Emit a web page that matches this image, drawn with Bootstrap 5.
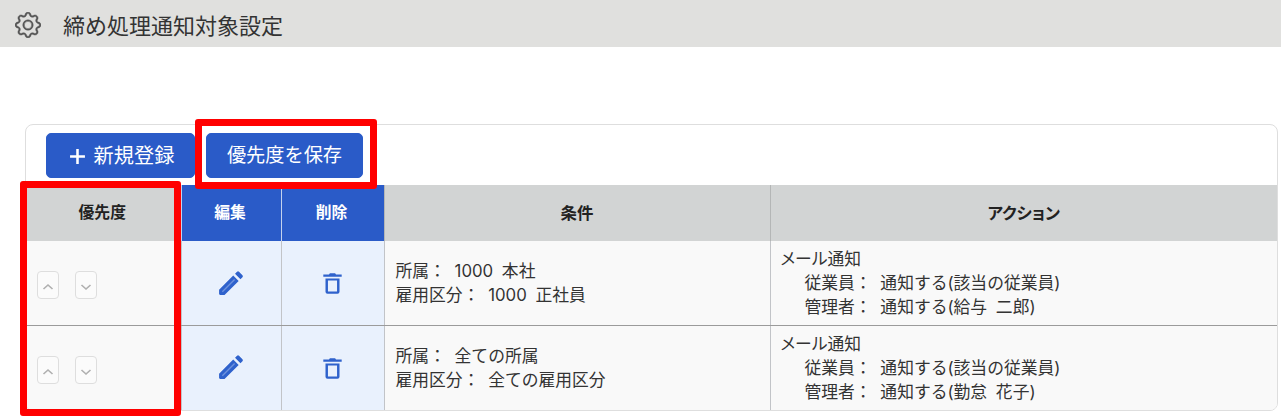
<!DOCTYPE html>
<html lang="ja">
<head>
<meta charset="utf-8">
<title>締め処理通知対象設定</title>
<link rel="stylesheet" href="https://cdn.jsdelivr.net/npm/bootstrap@5.3.0/dist/css/bootstrap.min.css">
<style>
html,body{height:100%;overflow:hidden}
body{font-family:Inter,"Noto Sans CJK JP",sans-serif;font-size:16.8px;color:#333;background:#fff;position:relative}
.page-head{height:47px;background:#e0e0de;padding-left:15px;gap:22px}
.page-head svg{width:26px;height:26px;fill:#555;stroke:#555;stroke-width:.25;position:relative;top:1px}
.page-head h1{font-size:22px;font-weight:400;margin:0;color:#333;line-height:1;position:relative;top:2px}
.panel{margin:77px 3px 0 25px;height:287px;border:1px solid #dedede;border-radius:8px;overflow:hidden}
.tools{height:60px;padding:8px 0 0 20px;gap:11px}
.act-btn{background:#2a5bc8;border-color:#2a5bc8;color:#fff;font-size:19.2px;line-height:1;height:45px;padding:1px 0 0;border-radius:5px;display:flex;align-items:center;justify-content:center}
.act-btn:hover{background:#2a5bc8;border-color:#2a5bc8;color:#fff}
.act-plus{width:149px;gap:8px;font-size:20.2px;padding-left:2px}
.act-plus svg{width:17px;height:17px;fill:#fff}
.act-save{width:157px}
.grid-tbl{table-layout:fixed;width:100%;margin:0;border-collapse:collapse;font-size:16.8px;line-height:24px}
.c1{width:155px}.c2{width:100px}.c3{width:103px}.c4{width:386px}
.grid-tbl th{height:56px;background:#d2d4d4;color:#222;font-weight:700;text-align:center;vertical-align:middle;padding:0;border:0;font-size:15.8px;border-left:1px solid #b4b6b6}
.grid-tbl th:first-child{border-left:0;padding-right:2px}
.grid-tbl th.blue{background:#2a5bc8;color:#fff;border-left-color:#c4d2ee;padding-right:2px}
.grid-tbl th.wide{font-size:16.4px}
.grid-tbl td{height:84.5px;background:#f9f9f9;color:#333;padding:0 10px 0 11px;vertical-align:middle;border:0;border-left:1px solid #c2c4c8;border-bottom:1px solid #9b9b9b;word-spacing:4px}
.grid-tbl td:first-child{border-left:0}
.grid-tbl td:last-child{padding-left:10px}
.grid-tbl td.pale{background:#e9f1fd;padding:0;text-align:center}
.grid-tbl td.prio{padding:0 0 0 11px}
.indent{padding-left:24px}
.kana{font-feature-settings:"palt"}
.mv{width:22px;height:28px;padding:0;background:#fbfbfb;border:1px solid #dedede;border-radius:4px;display:flex;align-items:center;justify-content:center}
.mv svg{width:12px;height:12px;fill:none;stroke:#b0b0b0;stroke-width:1.6;position:relative;top:2px}
.mv-row{gap:16px;position:relative;top:2px}
.ico-pen{width:29px;height:29px;fill:#2f62cc;position:relative;left:-1px}
.ico-pen line{stroke:#6f93dd;stroke-width:1.5}
.ico-bin{width:21px;height:24.5px;fill:#2f62cc}
.mark-box{position:absolute;border:7px solid #f00;border-radius:3px;pointer-events:none}
.mark-a{left:195px;top:119px;width:182px;height:70px}
.mark-b{left:20px;top:181px;width:161px;height:235px}
</style>
</head>
<body>
<header class="page-head d-flex align-items-center">
<svg viewBox="0 0 16 16"><path d="M8 4.754a3.246 3.246 0 1 0 0 6.492 3.246 3.246 0 0 0 0-6.492zM5.754 8a2.246 2.246 0 1 1 4.492 0 2.246 2.246 0 0 1-4.492 0z"/><path d="M9.796 1.343c-.527-1.79-3.065-1.79-3.592 0l-.094.319a.873.873 0 0 1-1.255.52l-.292-.16c-1.64-.892-3.433.902-2.54 2.541l.159.292a.873.873 0 0 1-.52 1.255l-.319.094c-1.79.527-1.79 3.065 0 3.592l.319.094a.873.873 0 0 1 .52 1.255l-.16.292c-.892 1.64.901 3.434 2.541 2.54l.292-.159a.873.873 0 0 1 1.255.52l.094.319c.527 1.79 3.065 1.79 3.592 0l.094-.319a.873.873 0 0 1 1.255-.52l.292.16c1.64.893 3.434-.902 2.54-2.541l-.159-.292a.873.873 0 0 1 .52-1.255l.319-.094c1.79-.527 1.79-3.065 0-3.592l-.319-.094a.873.873 0 0 1-.52-1.255l.16-.292c.893-1.64-.902-3.433-2.541-2.54l-.292.159a.873.873 0 0 1-1.255-.52l-.094-.319zm-2.633.283c.246-.835 1.428-.835 1.674 0l.094.319a1.873 1.873 0 0 0 2.693 1.115l.291-.16c.764-.415 1.6.42 1.184 1.185l-.159.292a1.873 1.873 0 0 0 1.116 2.692l.318.094c.835.246.835 1.428 0 1.674l-.319.094a1.873 1.873 0 0 0-1.115 2.693l.16.291c.415.764-.42 1.6-1.185 1.184l-.291-.159a1.873 1.873 0 0 0-2.693 1.116l-.094.318c-.246.835-1.428.835-1.674 0l-.094-.319a1.873 1.873 0 0 0-2.692-1.115l-.292.16c-.764.415-1.6-.42-1.184-1.185l.159-.291A1.873 1.873 0 0 0 1.945 8.93l-.319-.094c-.835-.246-.835-1.428 0-1.674l.319-.094A1.873 1.873 0 0 0 3.06 4.377l-.16-.292c-.415-.764.42-1.6 1.185-1.184l.292.159a1.873 1.873 0 0 0 2.692-1.115l.094-.319z"/></svg>
<h1>締め処理通知対象設定</h1>
</header>
<main class="panel">
<div class="tools d-flex">
<button type="button" class="btn act-btn act-plus"><svg viewBox="0 0 16 16"><path d="M6.8 1h2.4v5.8H15v2.4H9.2V15H6.8V9.2H1V6.8h5.8z"/></svg>新規登録</button>
<button type="button" class="btn act-btn act-save">優先度を保存</button>
</div>
<table class="table grid-tbl">
<colgroup><col class="c1"><col class="c2"><col class="c3"><col class="c4"><col></colgroup>
<thead><tr><th>優先度</th><th class="blue">編集</th><th class="blue">削除</th><th class="wide">条件</th><th class="wide kana">アクション</th></tr></thead>
<tbody>
<tr>
<td class="prio"><div class="d-flex mv-row"><button type="button" class="btn mv"><svg viewBox="0 0 12 12"><path d="M1.5 8 6 4l4.5 4"/></svg></button><button type="button" class="btn mv"><svg viewBox="0 0 12 12"><path d="M1.5 4 6 8l4.5-4"/></svg></button></div></td>
<td class="pale"><svg class="ico-pen" viewBox="0 0 32 32"><path d="M4.6 28.6a1.2 1.2 0 0 1-1.2-1.2v-4.6L19 7.2l6 6L9.4 28.6zM21 5.2l2.2-2.2a1.6 1.6 0 0 1 2.2 0l3.8 3.8a1.6 1.6 0 0 1 0 2.2L27 11.2z"/><line x1="7" y1="25" x2="20.5" y2="11.5"/></svg></td>
<td class="pale"><svg class="ico-bin" viewBox="0 0 24 28"><path d="M9 2.500h6l1 1.500h6.500v2.600h-21V4H8zM4 8.500h16v15.200a2.300 2.300 0 0 1-2.300 2.300H6.300a2.300 2.300 0 0 1-2.300-2.300zM6.800 10.800V23.300h10.400V10.800z" fill-rule="evenodd"/></svg></td>
<td><div>所属： 1000 本社</div><div>雇用区分： 1000 正社員</div></td>
<td><div><span class="kana">メール</span>通知</div><div class="indent">従業員： 通知する(該当の従業員)</div><div class="indent">管理者： 通知する(給与 二郎)</div></td>
</tr>
<tr>
<td class="prio"><div class="d-flex mv-row"><button type="button" class="btn mv"><svg viewBox="0 0 12 12"><path d="M1.5 8 6 4l4.5 4"/></svg></button><button type="button" class="btn mv"><svg viewBox="0 0 12 12"><path d="M1.5 4 6 8l4.5-4"/></svg></button></div></td>
<td class="pale"><svg class="ico-pen" viewBox="0 0 32 32"><path d="M4.6 28.6a1.2 1.2 0 0 1-1.2-1.2v-4.6L19 7.2l6 6L9.4 28.6zM21 5.2l2.2-2.2a1.6 1.6 0 0 1 2.2 0l3.8 3.8a1.6 1.6 0 0 1 0 2.2L27 11.2z"/><line x1="7" y1="25" x2="20.5" y2="11.5"/></svg></td>
<td class="pale"><svg class="ico-bin" viewBox="0 0 24 28"><path d="M9 2.500h6l1 1.500h6.500v2.600h-21V4H8zM4 8.500h16v15.200a2.300 2.300 0 0 1-2.300 2.300H6.300a2.300 2.300 0 0 1-2.300-2.300zM6.800 10.800V23.300h10.400V10.800z" fill-rule="evenodd"/></svg></td>
<td><div>所属： 全ての所属</div><div>雇用区分： 全ての雇用区分</div></td>
<td><div><span class="kana">メール</span>通知</div><div class="indent">従業員： 通知する(該当の従業員)</div><div class="indent">管理者： 通知する(勤怠 花子)</div></td>
</tr>
</tbody>
</table>
</main>
<div class="mark-box mark-a"></div>
<div class="mark-box mark-b"></div>
<script src="https://cdn.jsdelivr.net/npm/bootstrap@5.3.0/dist/js/bootstrap.bundle.min.js"></script>
</body>
</html>
